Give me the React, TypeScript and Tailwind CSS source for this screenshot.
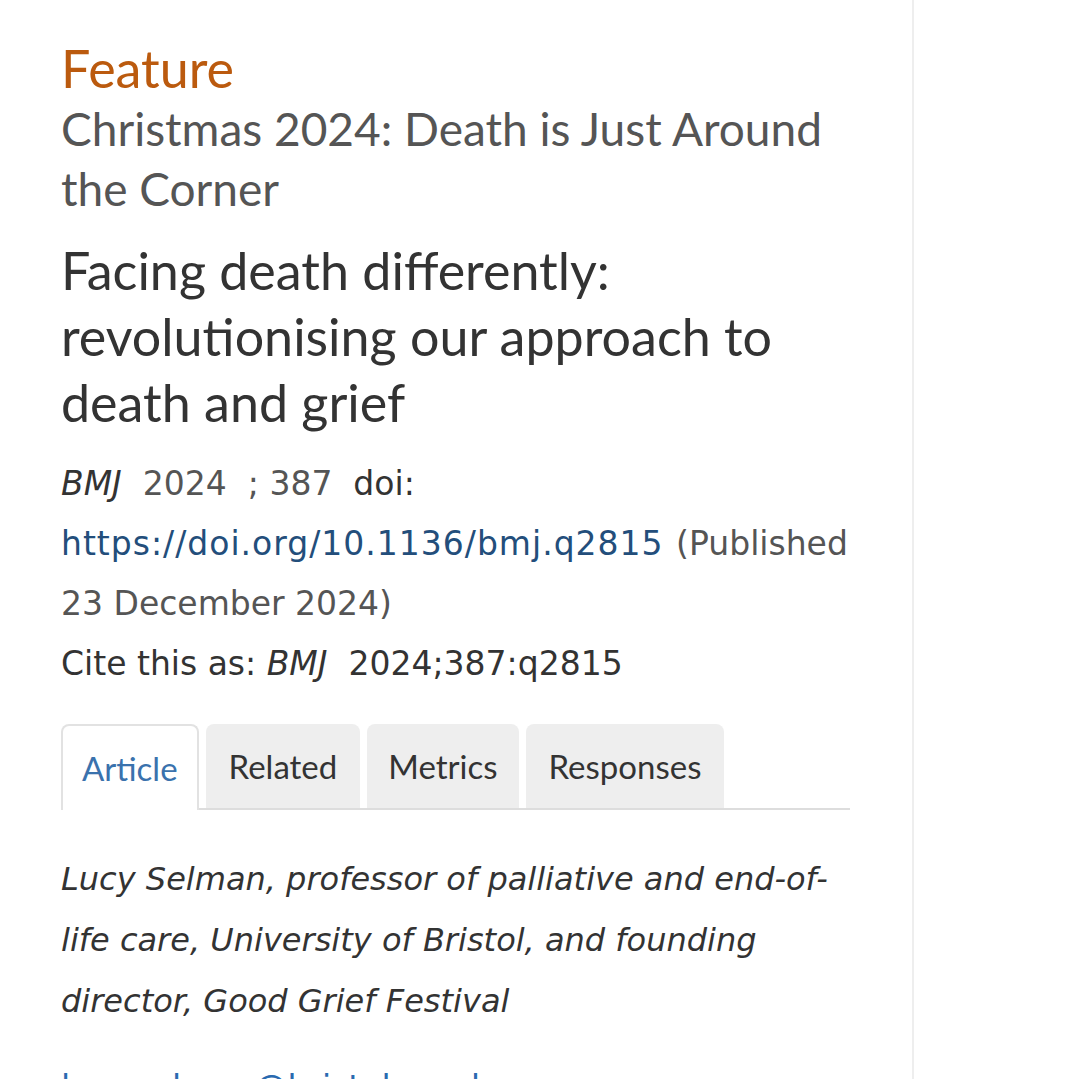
export default function App() {
  return (
    <div className="flex min-h-screen bg-white">
      <main className="w-[914px] shrink-0 border-r-2 border-[#eeeeee] pl-[61px] pr-[62px] pt-[37px]">
        <div className="font-['Lato',sans-serif]">
          <p className="text-[52px] leading-[62px] text-[#bb5a0e]">Feature</p>
          <p className="text-[46px] leading-[60px] text-[#555555]">
            Christmas 2024: Death is Just Around the Corner
          </p>
          <h1 className="mt-[18px] text-[52px] leading-[66px] text-[#333333]">
            Facing death differently: revolutionising our approach to death and grief
          </h1>
        </div>

        <div className="mt-[19px] font-['DejaVu_Sans',sans-serif] text-[33px] leading-[60px] text-[#555555]">
          <p>
            <em className="text-[#333333]">BMJ</em>&nbsp; 2024&nbsp; ; 387&nbsp; <span className="text-[#333333]">doi:</span>{" "}
            <a className="tracking-[1px] text-[#234e7b]">https://doi.org/10.1136/bmj.q2815</a>{" "}
            <span className="ml-[2px]">(Published 23 December 2024)</span>
          </p>
          <p className="text-[#333333]">
            Cite this as: <em>BMJ</em>&nbsp; 2024;387:q2815
          </p>
        </div>

        {/* tabs */}
        <div className="mt-[30px] flex items-end gap-[7px] border-b-2 border-[#dddddd] font-['Lato',sans-serif] text-[33px]">
          <div className="-mb-[2px] h-[86px] rounded-t-[8px] border-2 border-b-0 border-[#e2e2e2] bg-white px-[19px] pt-[18px] text-[#3a72ad]">
            Article
          </div>
          <div className="h-[84px] rounded-t-[8px] bg-[#eeeeee] px-[23px] pt-[18px] text-[#333333]">Related</div>
          <div className="h-[84px] rounded-t-[8px] bg-[#eeeeee] px-[21px] pt-[18px] text-[#333333]">Metrics</div>
          <div className="h-[84px] rounded-t-[8px] bg-[#eeeeee] px-[23px] pt-[18px] text-[#333333]">Responses</div>
        </div>

        <p className="mt-[39px] font-['DejaVu_Sans',sans-serif] text-[32px] italic leading-[61px] text-[#333333]">
          Lucy Selman, professor of palliative and end-of-life care, University of Bristol, and founding director, Good Grief Festival
        </p>
        <p className="mt-[26px] font-['DejaVu_Sans',sans-serif] text-[33px] leading-[60px] text-[#2a6ab0]">
          lucy.selman@bristol.ac.uk
        </p>
      </main>
      <aside className="flex-1 bg-white" />
    </div>
  );
}
